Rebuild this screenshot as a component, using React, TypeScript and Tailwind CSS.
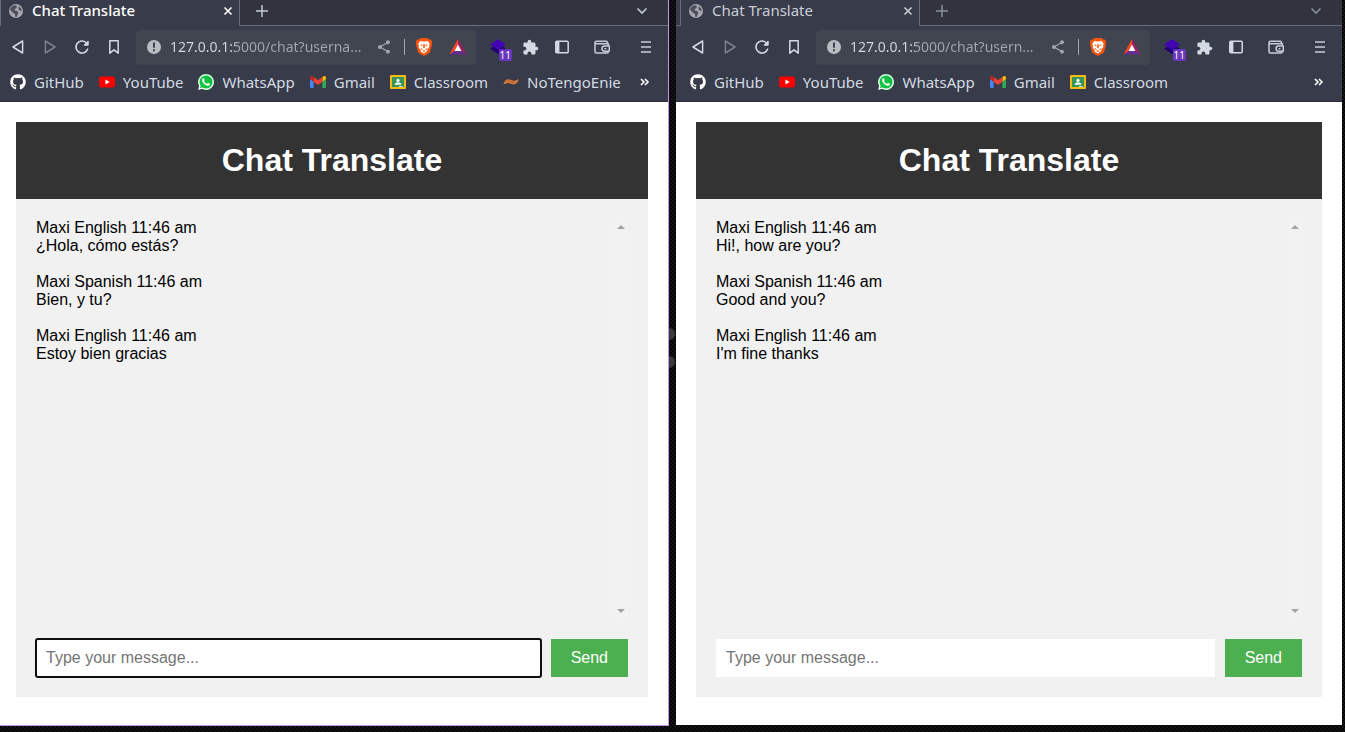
import type { ReactNode } from "react";
import clsx from "clsx";
import { FaGithub, FaWhatsapp } from "react-icons/fa";
import { MdExtension, MdShare } from "react-icons/md";

type Message = { author: string; time: string; text: string };

type Bookmark = { name: string; icon: ReactNode };

type BrowserWindowProps = {
  active: boolean;
  url: string;
  bookmarks: Bookmark[];
  messages: Message[];
};

const GlobeIcon = () => (
  <svg viewBox="0 0 16 16" className="size-4 shrink-0" aria-hidden="true">
    <circle cx="8" cy="8" r="7" fill="#a5a8ae" />
    <path
      d="M7.6 2.2 9 3.6 8.3 5.2 6.6 6 6.8 7.6 9.6 8.2 10.6 9.8 9.6 11.4 8.8 13.8 7.2 13.8 7 11.2 4.8 9.4 2.2 7.2 2.6 5 4.6 2.8Z M10.6 3.2 13.2 5.6 13.6 8.4 11.8 7.6 10.4 5.8Z"
      fill="#4c4f5b"
    />
  </svg>
);

const YoutubeIcon = () => (
  <svg viewBox="0 0 16 16" className="size-4 shrink-0" aria-hidden="true">
    <rect y="2.4" width="16" height="11.2" rx="2.4" fill="#f00" />
    <path d="M6.4 5.6v4.8L10.6 8z" fill="#fff" />
  </svg>
);

const WhatsappIcon = () => (
  <span className="flex size-4 shrink-0 items-center justify-center rounded-full bg-[#0fc143]">
    <FaWhatsapp className="size-[18px] shrink-0 text-white" />
  </span>
);

const GmailIcon = () => (
  <svg viewBox="52 42 88 66" className="size-4 shrink-0" aria-hidden="true">
    <path fill="#4285f4" d="M58 108h14V74L52 59v43c0 3.3 2.7 6 6 6" />
    <path fill="#34a853" d="M120 108h14c3.3 0 6-2.7 6-6V59l-20 15" />
    <path fill="#fbbc04" d="M120 48v26l20-15v-8c0-7.4-8.5-11.6-14.4-7.2" />
    <path fill="#ea4335" d="M72 74V48l24 18 24-18v26L96 92" />
    <path fill="#c5221f" d="M52 51v8l20 15V48l-5.6-4.2C60.5 39.4 52 43.6 52 51" />
  </svg>
);

const ClassroomIcon = () => (
  <svg viewBox="0 0 16 16" className="size-4 shrink-0" aria-hidden="true">
    <rect y="1" width="16" height="14" rx="1" fill="#f7bb12" />
    <rect x="2" y="3" width="12" height="10" fill="#35965a" />
    <circle cx="8" cy="6.4" r="1.6" fill="#fff" />
    <path d="M4.6 10.8c0-1.6 1.6-2.2 3.4-2.2s3.4.6 3.4 2.2z" fill="#fff" />
    <path d="M9 12h3.4v1H9z" fill="#e6e6e6" />
  </svg>
);

const TildeIcon = () => (
  <svg viewBox="0 0 16 16" className="size-4 shrink-0" aria-hidden="true">
    <path
      d="M.4 10.4C1.4 6.6 3.6 5 6.4 5.4 9 5.8 9.6 7.2 11.6 6.8 13 6.5 14 5.4 15.8 5.2 14.8 8.6 13 10.6 10.2 10.4 7.6 10.2 6.6 8.8 4.6 9 3 9.2 2 10.2.4 10.4Z"
      fill="#d87a35"
    />
    <path d="M4 7.2c3-.8 4 2 7.4 1.4" stroke="#a9623a" fill="none" />
  </svg>
);

const BraveIcon = () => (
  <svg viewBox="0 0 18 20" className="h-5 w-[18px] shrink-0" aria-hidden="true">
    <path
      d="M5.6 1h6.8l1.6 1.6 1.8-.2 1.4 2.4-.6 1.6.4 1.2-1.8 6.6c-.3 1.2-1 1.8-1.8 2.4L9 19l-4.4-2.4c-.8-.6-1.5-1.2-1.8-2.4L1 7.6l.4-1.2-.6-1.6 1.4-2.4 1.8.2z"
      fill="#fb5607"
    />
    <path
      d="M5.2 4 9 4.6 12.8 4l2 3-.8 1.2.4 1.6-2.2 2.6.2 1.4L9 16.6l-3.4-2.2.2-1.4-2.2-2.6.4-1.6L3.2 7z"
      fill="#fff"
    />
    <path
      d="M5 7.2l2.6.8-.6 1.4zM13 7.2l-2.6.8.6 1.4zM8.4 7h1.2l.3 3.6L9 11.6l-.9-1zM5.6 10.8 8 12.4l-1.4.6zM12.4 10.8 10 12.4l1.4.6zM7.4 14 9 13.2l1.6.8L9 15z"
      fill="#fb5607"
    />
  </svg>
);

const RewardsIcon = () => (
  <svg viewBox="0 0 18 16" className="h-4 w-[18px] shrink-0" aria-hidden="true">
    <path d="M9 0 .5 15.4 6 11.8 9 6z" fill="#ff4724" />
    <path d="M9 0l8.5 15.4L12 11.8 9 6z" fill="#9e1f63" />
    <path d="M.5 15.4h17L12 11.8H6z" fill="#662d91" />
    <path d="M9 5.6 12.4 12H5.6z" fill="#fff" />
  </svg>
);

const Triangle = ({ forward = false }: { forward?: boolean }) => (
  <svg viewBox="0 0 16 16" className="size-4" aria-hidden="true">
    <path
      d={forward ? "M3.4 2v12L13 8z" : "M12.6 2v12L3 8z"}
      fill="none"
      stroke={forward ? "#7b7f8a" : "#d3dae3"}
      strokeWidth="1.5"
      strokeLinejoin="round"
    />
  </svg>
);

const ReloadIcon = () => (
  <svg viewBox="0 0 16 16" className="size-4" aria-hidden="true">
    <path
      d="M13.6 10.2A6 6 0 1 1 12 3.5"
      fill="none"
      stroke="#d3dae3"
      strokeWidth="1.6"
      strokeLinecap="round"
    />
    <path d="M14.2 2v4.2H10z" fill="#d3dae3" stroke="#d3dae3" strokeLinejoin="round" />
  </svg>
);

const BookmarkIcon = () => (
  <svg viewBox="0 0 16 16" className="size-4" aria-hidden="true">
    <path
      d="M3.8 1.8h8.4v12.4L8 10.8l-4.2 3.4z"
      fill="none"
      stroke="#d3dae3"
      strokeWidth="1.5"
      strokeLinejoin="round"
    />
  </svg>
);

const InfoIcon = () => (
  <svg viewBox="0 0 16 16" className="size-4 shrink-0" aria-hidden="true">
    <circle cx="8" cy="8" r="7" fill="#b9bcc1" />
    <path d="M7 3.6h2v5.2H7zM7 10.2h2v2H7z" fill="#40454f" />
  </svg>
);

const LayersIcon = () => (
  <svg viewBox="0 0 16 16" className="size-4" aria-hidden="true">
    <path d="M0 9.4 8 5l8 4.4L8 15z" fill="#210074" />
    <path d="M0 5.6 8 .2l8 5.4L8 11z" fill="#4304b4" />
  </svg>
);

const SidebarIcon = () => (
  <svg viewBox="0 0 16 16" className="size-4" aria-hidden="true">
    <rect x="1.8" y="2.3" width="12.4" height="11.4" rx="1" fill="none" stroke="#d3dae3" strokeWidth="1.5" />
    <path d="M2 2.4h3.4v11.2H2z" fill="#d3dae3" />
  </svg>
);

const WalletIcon = () => (
  <svg viewBox="0 0 16 16" className="size-4" aria-hidden="true">
    <g fill="none" stroke="#c8ced8" strokeWidth="1.5" strokeLinejoin="round">
      <path d="M14.4 6.6V4.8H1V3.6c0-1 .6-1.4 1.4-1.4h9.8c.8 0 1.2.4 1.2 1.2v1.4M1 4.6v8c0 1 .4 1.5 1.4 1.5H13c1 0 1.4-.5 1.4-1.5" />
      <path d="M15.3 7v5.2h-4.7c-1.6 0-2.6-1-2.6-2.6S9 7 10.6 7z" />
    </g>
    <path d="M10.4 9h2v1.4h-2z" fill="#c8ced8" />
  </svg>
);

const MenuIcon = () => (
  <svg viewBox="0 0 16 16" className="size-4" aria-hidden="true">
    <path d="M3 3h10M3 8h10M3 13h10" stroke="#c8ced8" strokeWidth="1.6" />
  </svg>
);

const bookmarks: Bookmark[] = [
  { name: "GitHub", icon: <FaGithub className="size-4 shrink-0 text-white" /> },
  { name: "YouTube", icon: <YoutubeIcon /> },
  { name: "WhatsApp", icon: <WhatsappIcon /> },
  { name: "Gmail", icon: <GmailIcon /> },
  { name: "Classroom", icon: <ClassroomIcon /> },
];

const spanishChat: Message[] = [
  { author: "Maxi English", time: "11:46 am", text: "¿Hola, cómo estás?" },
  { author: "Maxi Spanish", time: "11:46 am", text: "Bien, y tu?" },
  { author: "Maxi English", time: "11:46 am", text: "Estoy bien gracias" },
];

const englishChat: Message[] = [
  { author: "Maxi English", time: "11:46 am", text: "Hi!, how are you?" },
  { author: "Maxi Spanish", time: "11:46 am", text: "Good and you?" },
  { author: "Maxi English", time: "11:46 am", text: "I'm fine thanks" },
];

function IconButton({ label, children }: { label: string; children: ReactNode }) {
  return (
    <button type="button" aria-label={label} className="relative flex size-8 shrink-0 items-center justify-center">
      {children}
    </button>
  );
}

function TabStrip({ active }: { active: boolean }) {
  return (
    <div className="flex h-[26px] bg-[#31343f]">
      <div className="w-1 border-b border-[#6b6e78] bg-[#383b49]" />
      <div
        className={clsx(
          "flex w-60 items-center border-x border-[#6b6e78] bg-[#383b49] pr-[3px] pb-1 pl-[7px]",
          active ? "text-white" : "text-[#c9ced6]"
        )}
      >
        <GlobeIcon />
        <span className={clsx("flex-1 pb-[2px] pl-2 text-[15px] leading-5", active && "font-medium")}>
          Chat Translate
        </span>
        <button type="button" aria-label="Close tab" className="flex w-4 justify-center">
          <svg viewBox="0 0 10 10" className="size-[10px]" aria-hidden="true">
            <path d="M1.5 1.5l7 7M8.5 1.5l-7 7" stroke="currentColor" strokeWidth="1.6" />
          </svg>
        </button>
      </div>
      <div
        className={clsx(
          "flex flex-1 items-center justify-between border-b border-[#6b6e78] pr-5 pb-[3px] pl-4",
          active ? "text-[#c3c8d2]" : "text-[#8b8f9a]"
        )}
      >
        <button type="button" aria-label="New tab">
          <svg viewBox="0 0 12 12" className="size-3" aria-hidden="true">
            <path d="M6 0v12M0 6h12" stroke="currentColor" strokeWidth="1.5" />
          </svg>
        </button>
        <button type="button" aria-label="Search tabs">
          <svg viewBox="0 0 12 12" className="size-3" aria-hidden="true">
            <path d="M1.5 3.5 6 8l4.5-4.5" fill="none" stroke="currentColor" strokeWidth="1.6" />
          </svg>
        </button>
      </div>
    </div>
  );
}

function Toolbar({ url }: { url: string }) {
  return (
    <div className="flex h-[42px] items-center pr-[6px] pl-[6px]">
      <IconButton label="Back">
        <Triangle />
      </IconButton>
      <IconButton label="Forward">
        <Triangle forward />
      </IconButton>
      <IconButton label="Reload">
        <ReloadIcon />
      </IconButton>
      <IconButton label="Bookmark this page">
        <BookmarkIcon />
      </IconButton>
      <div className="mx-[6px] flex h-[35px] min-w-0 flex-1 items-center rounded bg-[#40454f] pr-[9px] pl-[10px]">
        <InfoIcon />
        {/* host is brighter than the rest of the address */}
        <input
          type="text"
          aria-label="Address"
          defaultValue={url}
          className="ml-2 min-w-0 flex-1 bg-[linear-gradient(90deg,#d3dae3_65px,#a2a7ad_65px)] bg-clip-text pb-px text-sm leading-5 text-transparent outline-none"
        />
        <button type="button" aria-label="Share" className="mr-3 ml-1 shrink-0 text-[#a2a7ad]">
          <MdShare className="size-4" />
        </button>
        <span className="mr-[10px] h-4 w-px shrink-0 bg-[#a2a7ad]" />
        <button type="button" aria-label="Brave Shields" className="mr-4 shrink-0">
          <BraveIcon />
        </button>
        <button type="button" aria-label="Brave Rewards" className="shrink-0">
          <RewardsIcon />
        </button>
      </div>
      <IconButton label="Layers extension, 11">
        <LayersIcon />
        <span className="absolute right-[2px] bottom-[2px] rounded-xs bg-[#6936bd] px-px text-[10px] leading-3 text-white">
          11
        </span>
      </IconButton>
      <IconButton label="Extensions">
        <MdExtension className="size-[17px] text-[#d3dae3]" />
      </IconButton>
      <IconButton label="Sidebar">
        <SidebarIcon />
      </IconButton>
      <div className="ml-2 flex gap-3">
        <IconButton label="Wallet">
          <WalletIcon />
        </IconButton>
        <IconButton label="Menu">
          <MenuIcon />
        </IconButton>
      </div>
    </div>
  );
}

function BookmarksBar({ items }: { items: Bookmark[] }) {
  return (
    <nav className="flex h-[34px] items-center gap-[15px] border-b border-[#282b36] pr-[18px] pb-[5px] pl-[14px] text-[15px] leading-5 text-[#d3dae3]">
      {items.map((item) => (
        <a key={item.name} href="#" className="flex shrink-0 items-center gap-2">
          {item.icon}
          {item.name}
        </a>
      ))}
      <button type="button" aria-label="More bookmarks" className="ml-auto text-white">
        <svg viewBox="0 0 10 8" className="h-2 w-[10px]" aria-hidden="true">
          <path d="M1 1l3 3-3 3M5 1l3 3-3 3" fill="none" stroke="currentColor" strokeWidth="1.6" />
        </svg>
      </button>
    </nav>
  );
}

function Chat({ active, messages }: { active: boolean; messages: Message[] }) {
  return (
    <main className="flex-1 bg-white px-5 pt-5 pb-7 font-['Liberation_Sans',Arial,sans-serif] text-base leading-[18px] text-black">
      <header className="bg-[#333] p-5 text-center text-white">
        <h1 className="text-[32px] leading-[37px] font-bold">Chat Translate</h1>
      </header>
      <section className="bg-[#f1f1f1] p-5">
        <div className="mb-5 flex h-[400px] justify-between">
          <ul className="flex flex-col gap-[18px]">
            {messages.map((message) => (
              <li key={message.text}>
                <p>
                  {message.author} {message.time}
                </p>
                <p>{message.text}</p>
              </li>
            ))}
          </ul>
          <div className="flex w-[15px] flex-col items-center justify-between bg-[#f2f2f2] py-[6px]" aria-hidden="true">
            <svg viewBox="0 0 8 4" className="h-1 w-2">
              <path d="M0 4 4 0l4 4z" fill="#a3a3a3" />
            </svg>
            <svg viewBox="0 0 8 4" className="h-1 w-2">
              <path d="M0 0l4 4 4-4z" fill="#a3a3a3" />
            </svg>
          </div>
        </div>
        <form className="flex gap-[10px]" onSubmit={(e) => e.preventDefault()}>
          <input
            type="text"
            aria-label="Message"
            placeholder="Type your message..."
            className={clsx(
              "min-w-0 flex-1 bg-white p-[10px] placeholder:text-[#757575]",
              active ? "rounded-xs outline-2 -outline-offset-1 outline-[#101010]" : "outline-none"
            )}
          />
          <button type="submit" className="bg-[#4caf50] px-5 py-[10px] text-white">
            Send
          </button>
        </form>
      </section>
    </main>
  );
}

function BrowserWindow({ active, url, bookmarks, messages }: BrowserWindowProps) {
  return (
    <div
      className={clsx(
        "flex min-w-0 flex-col bg-[#383b49] font-['Noto_Sans',sans-serif]",
        active ? "-ml-1 flex-[672] border-r border-b border-[#c793e6]" : "mb-px flex-[666]"
      )}
    >
      <TabStrip active={active} />
      <Toolbar url={url} />
      <BookmarksBar items={bookmarks} />
      <Chat active={active} messages={messages} />
    </div>
  );
}

export default function App() {
  return (
    <div className="flex min-h-screen overflow-hidden bg-[repeating-conic-gradient(#060606_0_25%,#141414_0_50%)] bg-size-[4px_4px] pr-[3px] pb-[6px]">
      <BrowserWindow
        active
        url="127.0.0.1:5000/chat?userna..."
        bookmarks={[...bookmarks, { name: "NoTengoEnie", icon: <TildeIcon /> }]}
        messages={spanishChat}
      />
      {/* strip of wallpaper between the windows */}
      <div className="flex w-[7px] shrink-0 flex-col gap-4 pt-[328px]">
        <span className="h-3 w-[6px] rounded-r-full bg-[#3a3a3a]" />
        <span className="h-3 w-[6px] rounded-r-full bg-[#3a3a3a]" />
      </div>
      <BrowserWindow
        active={false}
        url="127.0.0.1:5000/chat?usern..."
        bookmarks={bookmarks}
        messages={englishChat}
      />
    </div>
  );
}
